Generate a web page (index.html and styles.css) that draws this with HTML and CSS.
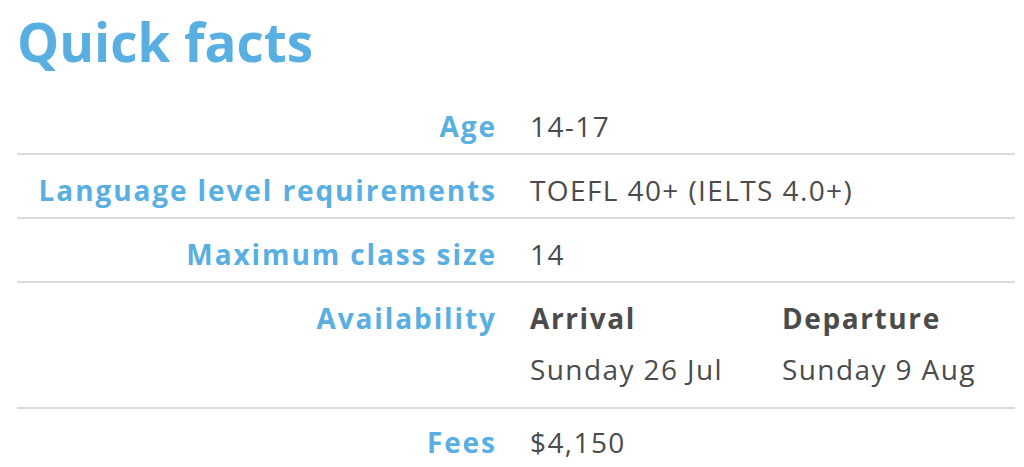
FILE: index.html
```html
<!DOCTYPE html>
<html lang="en">
<head>
<meta charset="utf-8">
<title>Quick facts</title>
<link rel="stylesheet" href="styles.css">
</head>
<body>
<section class="facts">
  <h1 class="title">Quick facts</h1>
  <dl class="table">
    <div class="row">
      <dt class="label">Age</dt>
      <dd class="value">14-17</dd>
    </div>
    <div class="row">
      <dt class="label">Language level requirements</dt>
      <dd class="value">TOEFL 40+ (IELTS 4.0+)</dd>
    </div>
    <div class="row">
      <dt class="label">Maximum class size</dt>
      <dd class="value">14</dd>
    </div>
    <div class="row row-tall">
      <dt class="label">Availability</dt>
      <dd class="value">
        <div class="dates">
          <div class="date-col">
            <div class="date-head">Arrival</div>
            <div class="date-val">Sunday 26 Jul</div>
          </div>
          <div class="date-col">
            <div class="date-head">Departure</div>
            <div class="date-val">Sunday 9 Aug</div>
          </div>
        </div>
      </dd>
    </div>
    <div class="row row-last">
      <dt class="label">Fees</dt>
      <dd class="value">$4,150</dd>
    </div>
  </dl>
</section>
</body>
</html>
```

FILE: styles.css
```css
html, body {
  margin: 0;
  padding: 0;
  background: #ffffff;
}

body {
  font-family: "Open Sans", "Liberation Sans", sans-serif;
  color: #4b4b4b;
}

.facts {
  padding: 0 9px 0 17px;
}

.title {
  margin: 0;
  padding-top: 10px;
  height: 91px;
  box-sizing: border-box;
  font-size: 53px;
  line-height: 64px;
  font-weight: 700;
  color: #5aafe2;
}

.table {
  margin: 0;
}

.row {
  display: grid;
  grid-template-columns: 478px 1fr;
  column-gap: 35px;
  padding: 18px 0 10px;
  border-bottom: 2px solid #dadada;
  font-size: 28px;
  line-height: 34px;
}

.row-last {
  border-bottom: none;
  padding-top: 16px;
}

.label {
  margin: 0 -1.9px 0 0;
  text-align: right;
  font-weight: 700;
  color: #5aafe2;
  letter-spacing: 1.9px;
}

.value {
  margin: 0;
  color: #4b4b4b;
  letter-spacing: 1.4px;
}

.row-tall {
  padding-bottom: 21px;
}

.dates {
  display: flex;
}

.date-col {
  width: 252px;
  display: flex;
  flex-direction: column;
  gap: 17px;
}

.date-head {
  font-weight: 700;
  letter-spacing: 1.6px;
}
```
